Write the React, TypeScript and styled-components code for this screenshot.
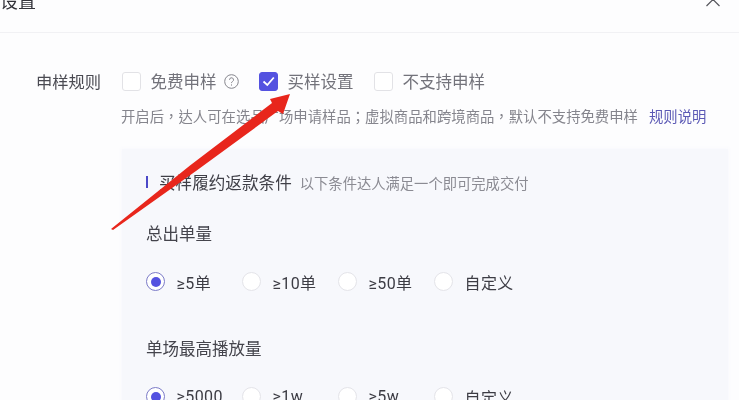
import React from 'react'
import styled, { createGlobalStyle } from 'styled-components'

const GlobalStyle = createGlobalStyle`
    html, body {
        margin: 0;
        padding: 0;
        background: #fdfdfe;
    }
    body {
        font-family: "Noto Sans CJK SC", "Noto Sans", sans-serif;
        color: #3c3c44;
    }
`

const Page = styled.div`
    position: relative;
    width: 739px;
    height: 400px;
    overflow: hidden;
    filter: blur(0.35px);
`

const Header = styled.header`
    display: flex;
    justify-content: space-between;
    align-items: flex-end;
    height: 33px;
    box-sizing: border-box;
    padding: 0 19px 19px 0;
    border-bottom: 1px solid #f1f1f4;
`

const Title = styled.h2`
    margin: 0;
    font-size: 18px;
    font-weight: 400;
    line-height: 26px;
    color: #33333a;
`

const CloseIcon = styled.svg`
    width: 14px;
    height: 14px;
    flex: none;
    stroke: #55555c;
    stroke-width: 1.2;
    fill: none;
`

const Body = styled.main`
    padding: 37px 11px 0 36px;
`

const RuleRow = styled.div`
    display: flex;
    align-items: center;
    height: 22px;
`

const RuleLabel = styled.span`
    width: 86px;
    font-size: 16.3px;
    color: #4a4a52;
`

const CheckOption = styled.label<{ $tight?: boolean }>`
    display: flex;
    align-items: center;
    gap: 10px;
    margin-right: ${p => (p.$tight ? 0 : 20.5)}px;
    font-size: 16.5px;
    color: #73737b;
`

const CheckBox = styled.span<{ $checked?: boolean }>`
    display: flex;
    align-items: center;
    justify-content: center;
    width: 18.5px;
    height: 19px;
    box-sizing: border-box;
    border-radius: 3px;
    border: 1px solid ${p => (p.$checked ? '#5452e0' : '#e2e2e6')};
    background: ${p => (p.$checked ? '#5452e0' : '#fff')};
`

const CheckMark = styled.svg`
    width: 15px;
    height: 15px;
    stroke: #fff;
    stroke-width: 1.8;
    fill: none;
`

const HelpIcon = styled.svg`
    width: 15px;
    height: 15px;
    margin-left: 7.5px;
    margin-right: 20px;
    stroke: #85858c;
    fill: none;
`

const HelpRow = styled.div`
    display: flex;
    align-items: center;
    margin: 13px 0 0 85px;
    height: 20px;
    font-family: "Noto Sans CJK TC", "Noto Sans CJK SC", sans-serif;
    font-size: 14.36px;
    color: #85858d;
    white-space: nowrap;
`

const RuleLink = styled.a`
    margin-left: 11px;
    color: #5b59b5;
`

const Panel = styled.section`
    margin: 24px 0 0 86px;
    height: 300px;
    padding: 26px 0 0 24px;
    background: #f7f8fc;
    box-shadow: 0 0 4px 1px #f9f9fd;
`

const PanelHead = styled.div`
    display: flex;
    align-items: center;
    height: 14px;
`

const AccentBar = styled.span`
    width: 2px;
    height: 12px;
    margin-right: 11px;
    background: #4b49c8;
`

const PanelTitle = styled.span`
    font-size: 16.6px;
    color: #3f3f47;
`

const PanelHint = styled.span`
    margin-left: 8px;
    font-size: 14.3px;
    color: #8b8b93;
`

const GroupLabel = styled.div<{ $gap: number }>`
    margin-top: ${p => p.$gap}px;
    height: 24px;
    line-height: 24px;
    font-size: 16.5px;
    color: #44444c;
`

const RadioRow = styled.div`
    display: flex;
    align-items: center;
    margin-top: 25.75px;
    height: 22px;
`

const RadioOption = styled.label`
    display: flex;
    align-items: center;
    gap: 11.5px;
    width: 96px;
    font-family: Roboto, "Noto Sans CJK SC", sans-serif;
    font-size: 16px;
    letter-spacing: 0.4px;
    color: #3c3c44;
    white-space: nowrap;
`

const RadioDot = styled.span<{ $checked?: boolean }>`
    display: flex;
    align-items: center;
    justify-content: center;
    width: 19px;
    height: 19px;
    box-sizing: border-box;
    border-radius: 50%;
    background: #fff;
    border: 1px solid ${p => (p.$checked ? '#7c7bc8' : '#e4e4e9')};
    &::after {
        content: '';
        display: ${p => (p.$checked ? 'block' : 'none')};
        width: 10px;
        height: 10px;
        border-radius: 50%;
        background: #5452e0;
    }
`

const ArrowOverlay = styled.svg`
    position: absolute;
    left: 0;
    top: 0;
    width: 739px;
    height: 400px;
    pointer-events: none;
`

const Radio = ({ label, checked }: { label: string; checked?: boolean }) => (
    <RadioOption>
        <RadioDot $checked={checked} />
        {label}
    </RadioOption>
)

const App = () => {
    return (
        <Page>
            <GlobalStyle />
            <Header>
                <Title>设置</Title>
                <CloseIcon viewBox="0 0 14 14">
                    <path d="M0.5 7 L7 0.5 L13.5 7" />
                </CloseIcon>
            </Header>
            <Body>
                <RuleRow>
                    <RuleLabel>申样规则</RuleLabel>
                    <CheckOption $tight>
                        <CheckBox />
                        免费申样
                    </CheckOption>
                    <HelpIcon viewBox="0 0 15 15">
                        <circle cx="7.5" cy="7.5" r="6.8" />
                        <path d="M5.5 5.8 a2 2 0 1 1 3 1.7 c-.7 .4 -1 .8 -1 1.6" />
                        <path d="M7.5 10.4 v1.2" />
                    </HelpIcon>
                    <CheckOption>
                        <CheckBox $checked>
                            <CheckMark viewBox="0 0 15 15">
                                <path d="M2.5 7.5 L6.3 11 L12.8 3.5" />
                            </CheckMark>
                        </CheckBox>
                        买样设置
                    </CheckOption>
                    <CheckOption>
                        <CheckBox />
                        不支持申样
                    </CheckOption>
                </RuleRow>
                <HelpRow>
                    开启后，达人可在选品广场申请样品；虚拟商品和跨境商品，默认不支持免费申样
                    <RuleLink>规则说明</RuleLink>
                </HelpRow>
                <Panel>
                    <PanelHead>
                        <AccentBar />
                        <PanelTitle>买样履约返款条件</PanelTitle>
                        <PanelHint>以下条件达人满足一个即可完成交付</PanelHint>
                    </PanelHead>
                    <GroupLabel $gap={32}>总出单量</GroupLabel>
                    <RadioRow>
                        <Radio label="≥5单" checked />
                        <Radio label="≥10单" />
                        <Radio label="≥50单" />
                        <Radio label="自定义" />
                    </RadioRow>
                    <GroupLabel $gap={43}>单场最高播放量</GroupLabel>
                    <RadioRow>
                        <Radio label="≥5000" checked />
                        <Radio label="≥1w" />
                        <Radio label="≥5w" />
                        <Radio label="自定义" />
                    </RadioRow>
                </Panel>
            </Body>
            <ArrowOverlay viewBox="0 0 739 400">
                <path d="M290 94 L270 99 L272 103 L190 165.5 L111 229 L113 230 L196 171 L278 111 L283 114 Z" fill="#e8261c" />
            </ArrowOverlay>
        </Page>
    )
}

export default App
